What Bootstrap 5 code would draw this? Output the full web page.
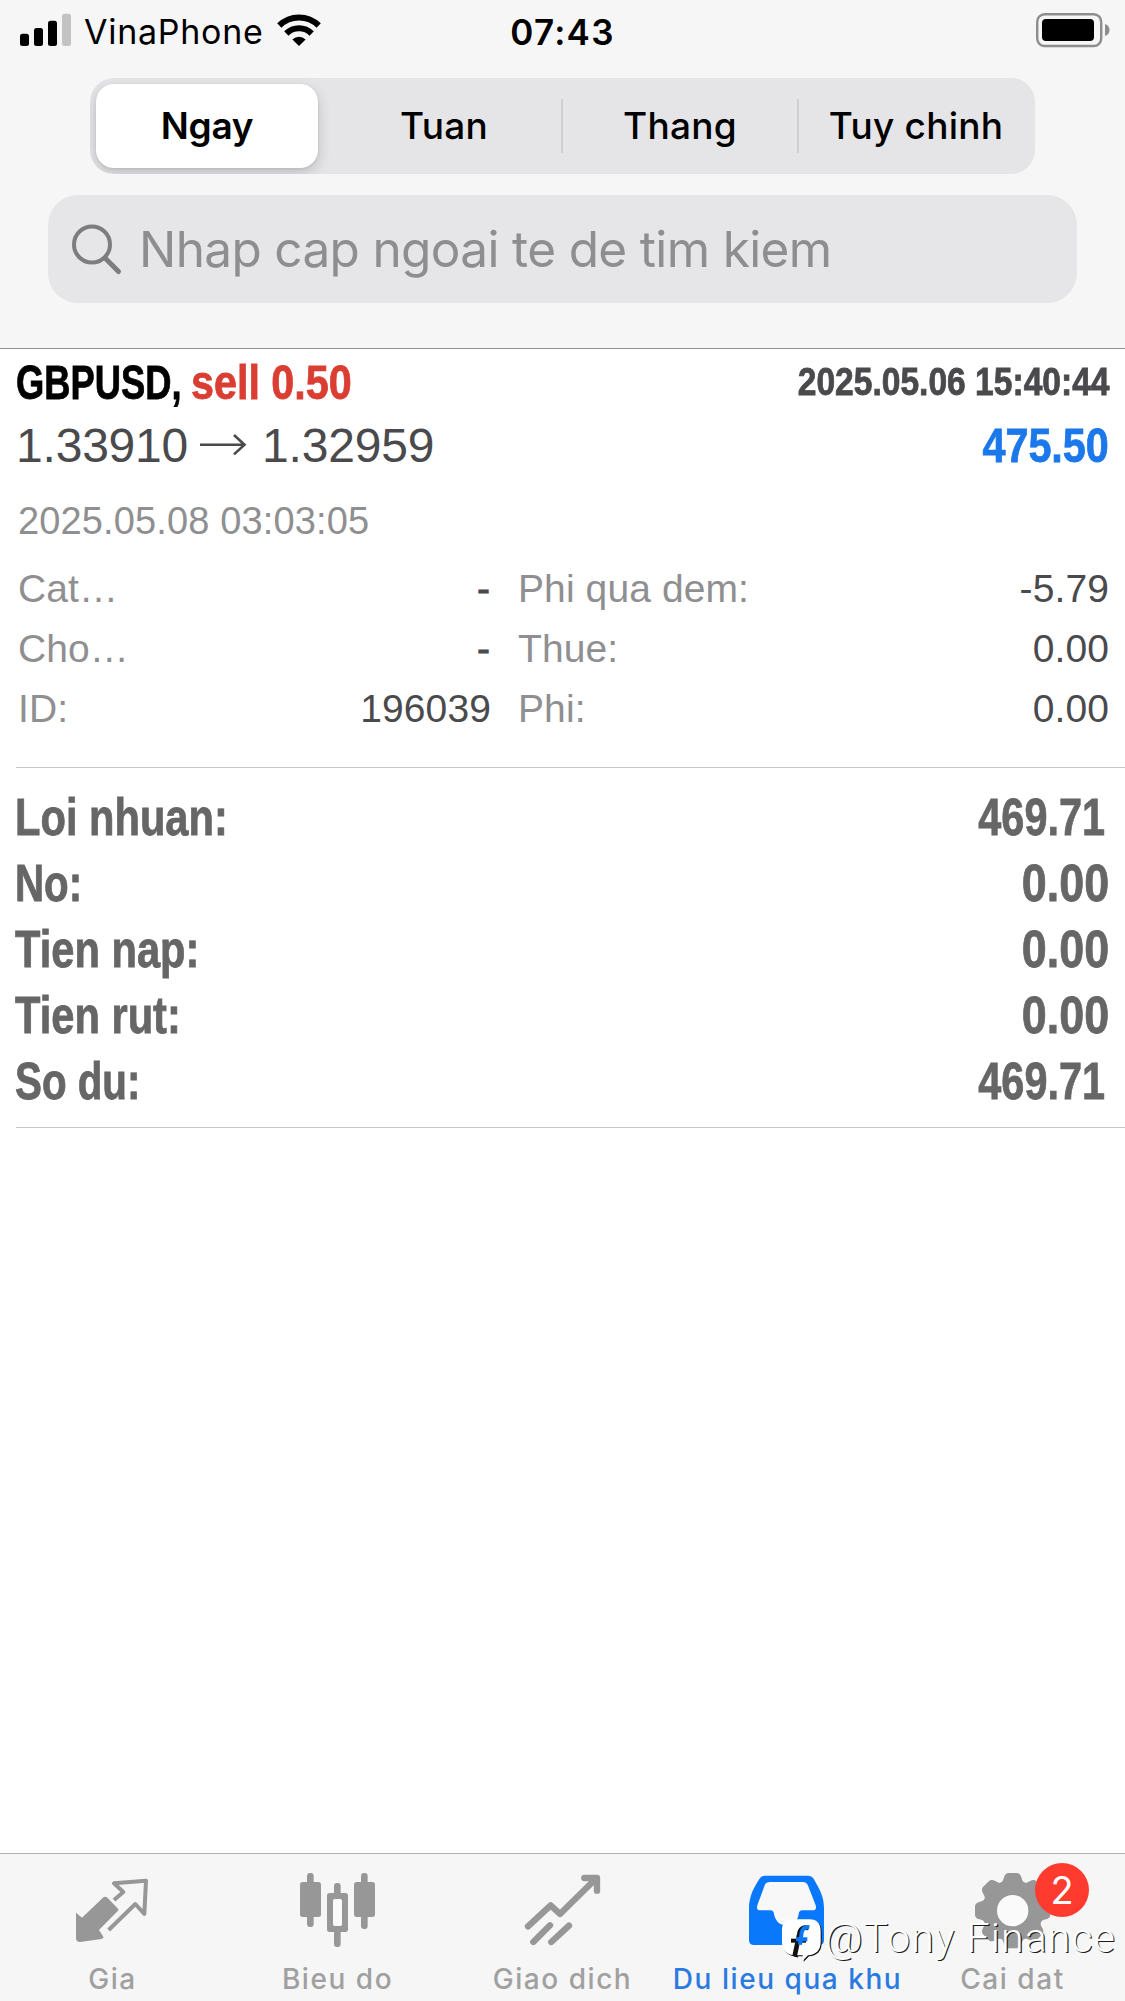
<!DOCTYPE html>
<html lang="vi">
<head>
<meta charset="utf-8">
<meta name="viewport" content="width=device-width, initial-scale=1">
<title>Du lieu qua khu</title>
<link href="https://cdn.jsdelivr.net/npm/bootstrap@5.3.0/dist/css/bootstrap.min.css" rel="stylesheet">
<style>
  body { font-family: "Liberation Sans", Arial, sans-serif; color: #4a4a4d; background: #fff; white-space: nowrap; }
  .screen { height: 2001px; overflow: hidden; }
  .ui { font-family: Inter, sans-serif; color: #000; }
  .top-panel { height: 349px; background: #f6f6f6; border-bottom: 1px solid #8f8f91; }
  .status { height: 62px; font-size: 34px; line-height: 64px; }
  .carrier { width: 190px; letter-spacing: .73px; }
  .clock { font-size: 35px; font-weight: 600; letter-spacing: 1.3px; }
  .periods { margin: 16px 90px 0; height: 96px; border-radius: 24px; background: #e5e5e7; overflow: hidden; }
  .period { width: 236px; flex: 0 0 auto; font-size: 37px; font-weight: 500; letter-spacing: .25px; }
  .period.current { font-weight: 600; letter-spacing: -.29px; }
  .pill { width: 222px; height: 84px; margin-left: 6px; border-radius: 18px; background: #fff; box-shadow: 0 5px 14px rgba(0,0,0,.17), 0 1px 3px rgba(0,0,0,.08); }
  .rule-v { width: 2px; height: 54px; margin-left: -1px; margin-right: -1px; background: #cfcfd2; }
  .finder { margin: 21px 48px 0; height: 108px; border-radius: 30px; background: #e6e6e8; color: #8e8e90; font-size: 49.5px; letter-spacing: -.65px; }
  .deal { margin-left: 16px; padding-top: 1px; padding-bottom: 28px; border-bottom: 1px solid #c6c6c8; }
  .inset-r { padding-right: 16px; }
  .fit-l, .fit-r { display: inline-block; transform: scaleX(var(--sx)); transform-origin: left center; -webkit-text-stroke: .8px currentColor; }
  .fit-r { transform-origin: right center; }
  .line-a { height: 65px; line-height: 65px; font-size: 48px; }
  .line-b { height: 61px; line-height: 61px; font-size: 48px; letter-spacing: -.2px; }
  .arrow { width: 56px; height: 61px; margin: 0 12px 0 6px; }
  .line-c { height: 83px; line-height: 75px; padding: 8px 0 0 2px; font-size: 38px; letter-spacing: .14px; color: #8f8f91; }
  .symbol { --sx: .757; margin-right: -44px; color: #000; }
  .side { --sx: .86; color: #da3e32; }
  .opened { --sx: .872; font-size: 38.5px; line-height: 63px; }
  .profit { --sx: .861; letter-spacing: 0; color: #1b78ea; }
  .facts { font-size: 39px; line-height: 60px; padding-left: 2px; letter-spacing: .1px; }
  .facts-left { width: 473px; margin-right: 27px; }
  .dash { padding-right: 1px; -webkit-text-stroke: .8px currentColor; }
  .dim { color: #8f8f91; }
  .totals { margin-left: 16px; padding-top: 16px; padding-bottom: 13px; border-bottom: 1px solid #c6c6c8; color: #666; font-size: 52px; line-height: 66px; }
  .totals .fit-l { --sx: .801; margin-left: -1px; }
  .totals .short { --sx: .775; }
  .totals .fit-r { --sx: .863; }
  .totals .tight { --sx: .797; margin-right: 4px; }
  .tabs-bar { height: 148px; border-top: 1px solid #b2b2b4; background: #f6f6f6; }
  .tab { width: 225px; font-size: 28px; font-weight: 500; letter-spacing: 1.54px; line-height: 42px; color: #a0a0a0; }
  .tab.on { color: #2a7ae0; }
  .tab svg { width: 225px; height: 104px; }
  .count { left: 135px; top: 9px; width: 54px; height: 54px; background: #ff3b30; font-size: 38px; font-weight: 400; line-height: 54px; letter-spacing: 0; padding: 0; }
  .credit { left: 780px; top: 1912px; font: 300 41px/53px Roboto, sans-serif; letter-spacing: 1.1px; color: #fff; text-shadow: 1.2px 1.2px 0 #1a1a1a; }
  .credit svg { filter: drop-shadow(1.5px 1.5px 0 #111); }
</style>
<script src="https://cdn.jsdelivr.net/npm/bootstrap@5.3.0/dist/js/bootstrap.bundle.min.js"></script>
</head>
<body>
<div class="screen d-flex flex-column position-relative">

  <header class="top-panel ui flex-shrink-0">
    <div class="status row g-0">
      <div class="col-5 d-flex">
        <svg width="84" height="62" viewBox="0 0 84 62"><rect x="20" y="33.7" width="9" height="12.3" rx="2.5"/><rect x="34" y="28" width="9" height="18" rx="2.5"/><rect x="48" y="20.7" width="9" height="25.3" rx="2.5"/><rect x="62" y="13.7" width="9" height="32.3" rx="2.5" fill="#c3c3c3"/></svg>
        <span class="carrier">VinaPhone</span>
        <svg width="50" height="62" viewBox="274 0 50 62"><path d="M299 46l-6.600-6.600a9.500 9.500 0 0 1 13.200 0z"/><g fill="none" stroke="#000" stroke-width="6"><path d="M279.300 25.500a28 28 0 0 1 39.400 0"/><path d="M286.300 33.500a18 18 0 0 1 25.400 0"/></g></svg>
      </div>
      <div class="col-2 text-center clock">07:43</div>
      <div class="col-5 d-flex justify-content-end">
        <svg width="95" height="62" viewBox="1030 0 95 62"><rect x="1037.200" y="14.200" width="64" height="31.800" rx="7.500" fill="none" stroke="#8d8d8d" stroke-width="2.400"/><rect x="1042" y="19" width="52" height="22" rx="4"/><path d="M1105 24q4.500 1.500 4.500 6t-4.500 6z" fill="#8d8d8d"/></svg>
      </div>
    </div>

    <nav class="periods d-flex align-items-center">
      <div class="period current d-flex"><span class="pill d-flex align-items-center justify-content-center">Ngay</span></div>
      <div class="period text-center">Tuan</div>
      <span class="rule-v"></span>
      <div class="period text-center">Thang</div>
      <span class="rule-v"></span>
      <div class="period text-center">Tuy chinh</div>
    </nav>

    <div class="finder d-flex align-items-center">
      <svg width="91" height="108" viewBox="48 195 91 108" fill="none" stroke="#7d7d80" stroke-linecap="round"><circle cx="92" cy="244.500" r="18" stroke-width="4"/><path d="M105.500 258.500L118.500 271.500" stroke-width="5"/></svg>
      <span>Nhap cap ngoai te de tim kiem</span>
    </div>
  </header>

  <main class="flex-grow-1">
    <article class="deal">
      <div class="line-a d-flex justify-content-between inset-r fw-bold">
        <div><span class="fit-l symbol">GBPUSD,</span><span class="fit-l side">sell 0.50</span></div>
        <span class="fit-r opened">2025.05.06 15:40:44</span>
      </div>
      <div class="line-b d-flex justify-content-between inset-r">
        <div class="d-flex align-items-center">
          <span>1.33910</span>
          <svg class="arrow" viewBox="196 415 56 61" fill="none" stroke="#4a4a4d" stroke-width="2.600"><path d="M202 444.700H246M236 435L246.500 444.700L236 454.400"/></svg>
          <span>1.32959</span>
        </div>
        <span class="fit-r profit fw-bold">475.50</span>
      </div>
      <div class="line-c">2025.05.08 03:03:05</div>
      <div class="facts d-flex inset-r">
        <div class="facts-left">
          <div class="d-flex justify-content-between"><span class="dim">Cat…</span><span class="dash">-</span></div>
          <div class="d-flex justify-content-between"><span class="dim">Cho…</span><span class="dash">-</span></div>
          <div class="d-flex justify-content-between"><span class="dim">ID:</span><span>196039</span></div>
        </div>
        <div class="flex-grow-1">
          <div class="d-flex justify-content-between"><span class="dim">Phi qua dem:</span><span>-5.79</span></div>
          <div class="d-flex justify-content-between"><span class="dim">Thue:</span><span>0.00</span></div>
          <div class="d-flex justify-content-between"><span class="dim">Phi:</span><span>0.00</span></div>
        </div>
      </div>
    </article>

    <section class="totals fw-bold">
      <div class="d-flex justify-content-between inset-r"><span class="fit-l">Loi nhuan:</span><span class="fit-r tight">469.71</span></div>
      <div class="d-flex justify-content-between inset-r"><span class="fit-l short">No:</span><span class="fit-r">0.00</span></div>
      <div class="d-flex justify-content-between inset-r"><span class="fit-l">Tien nap:</span><span class="fit-r">0.00</span></div>
      <div class="d-flex justify-content-between inset-r"><span class="fit-l">Tien rut:</span><span class="fit-r">0.00</span></div>
      <div class="d-flex justify-content-between inset-r"><span class="fit-l short">So du:</span><span class="fit-r tight">469.71</span></div>
    </section>
  </main>

  <footer class="tabs-bar ui d-flex flex-shrink-0">
    <div class="tab d-flex flex-column align-items-center">
      <svg viewBox="0 42 675 312"><path d="M228 218L246 233L308 174Q316 167 323 174L354 206Q357 209 354 212L297 270L311 292Q309 296 304 297L240 306Q228 306 228 295Z" fill="#979797"/><path d="M342 180L370 156L342 130L438 122L433 222L406 192L326 270" fill="none" stroke="#979797" stroke-width="12" stroke-linejoin="round"/></svg>
      <span>Gia</span>
    </div>
    <div class="tab d-flex flex-column align-items-center">
      <svg viewBox="675 42 675 312" fill="#979797"><rect x="921" y="99" width="20" height="162" rx="9"/><rect x="900" y="126" width="63" height="105" rx="8"/><rect x="1002" y="129" width="20" height="192" rx="9"/><rect x="981" y="159" width="63" height="117" rx="8"/><rect x="999" y="177" width="27" height="81" rx="5" fill="#fafafa"/><rect x="1083" y="99" width="20" height="168" rx="9"/><rect x="1062" y="126" width="63" height="105" rx="8"/></svg>
      <span>Bieu do</span>
    </div>
    <div class="tab d-flex flex-column align-items-center">
      <svg viewBox="240 42 675 312" fill="none" stroke="#979797" stroke-width="19" stroke-linejoin="round" stroke-linecap="round"><path d="M474 259L542 196L570 222L676 118M643 114H681V152M490 306L540 256M544 306L597 257"/></svg>
      <span>Giao dich</span>
    </div>
    <div class="tab on d-flex flex-column align-items-center">
      <svg viewBox="-195 42 675 312"><path d="M75 107H205Q215 107 220 115C240 150 252 170 252 205V300Q252 315 238 315H42Q27 315 27 300V205C27 170 40 145 58 117Q63 107 75 107Z" fill="#0a78fb"/><path d="M90 126H190Q199 126 203 134L227 196Q231 211 219 211H187Q177 211 176 222C172 246 158 256 139 256C120 256 106 244 102 222Q101 211 91 211H60Q48 211 52 196L74 136Q78 126 90 126Z" fill="#f8f8f8"/></svg>
      <span>Du lieu qua khu</span>
    </div>
    <div class="tab position-relative d-flex flex-column align-items-center">
      <svg viewBox="480 42 675 312" fill="#979797"><circle cx="818" cy="212" r="92"/><path id="tooth" d="M774 137Q788 130 792 112Q796 99 806 99H830Q840 99 844 112Q848 130 862 137Z"/><use href="#tooth" transform="rotate(45 818 212)"/><use href="#tooth" transform="rotate(90 818 212)"/><use href="#tooth" transform="rotate(135 818 212)"/><use href="#tooth" transform="rotate(180 818 212)"/><use href="#tooth" transform="rotate(225 818 212)"/><use href="#tooth" transform="rotate(270 818 212)"/><use href="#tooth" transform="rotate(315 818 212)"/><circle cx="818" cy="212" r="47" fill="#fafafa"/></svg>
      <span>Cai dat</span>
      <span class="badge rounded-circle position-absolute count">2</span>
    </div>
  </footer>

  <div class="credit position-absolute d-flex">
    <svg width="45" height="58" viewBox="30 36 135 174"><path d="M64 58H118C142 58 152 72 152 94V126C152 152 137 164 114 166L98 182L98 166L76 166L62 164C42 156 36 146 36 126V94C36 70 44 58 64 58Z" fill="#fff"/><path d="M116 84Q92 78 88 102L74 168" fill="none" stroke="#111" stroke-width="14"/><path d="M63 122H108" stroke="#111" stroke-width="12"/><path d="M118 82Q98 79 95 98L90 134M78 118H112" fill="none" stroke="#0a78fb" stroke-width="12"/></svg>
    <span>@Tony Finance</span>
  </div>
</div>
</body>
</html>
